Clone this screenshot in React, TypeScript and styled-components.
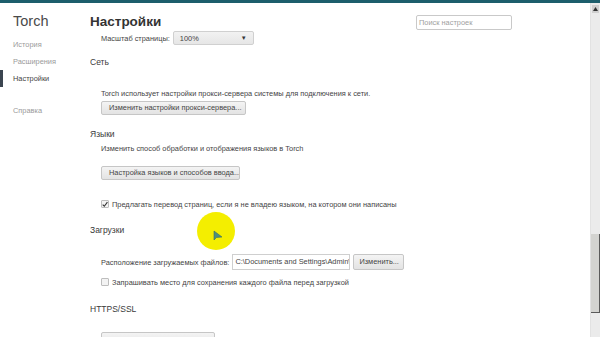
import React from "react";
import styled, { createGlobalStyle } from "styled-components";

const Global = createGlobalStyle`
  html, body { margin: 0; padding: 0; background: #fff; overflow: hidden; }
  body { font-family: "Liberation Sans", Arial, sans-serif; }
`;

const Page = styled.div`
  width: 600px;
  height: 337px;
  display: flex;
  flex-direction: column;
  overflow: hidden;
  position: relative;
  background: #fff;
`;

const TopBar = styled.div`
  height: 3px;
  background: #1d5e6c;
  flex: none;
`;

const Body = styled.div`
  flex: 1;
  display: flex;
  min-height: 0;
`;

const Sidebar = styled.div`
  width: 90px;
  flex: none;
  display: flex;
  flex-direction: column;
  padding-top: 8px;
`;

const Brand = styled.div`
  flex: none;
  height: 20px;
  line-height: 20px;
  padding-left: 13px;
  font-size: 14.5px;
  color: #4a4a4a;
`;

const NavItem = styled.div<{ $active?: boolean; $mt?: number }>`
  flex: none;
  height: 17px;
  line-height: 17px;
  margin-top: ${(p) => p.$mt ?? 0}px;
  padding-left: ${(p) => (p.$active ? 10 : 13)}px;
  border-left: ${(p) => (p.$active ? "3px solid #3b4550" : "none")};
  font-size: 7.4px;
  color: ${(p) => (p.$active ? "#444" : "#9a9a9a")};
`;

const Main = styled.div`
  flex: 1;
  display: flex;
  flex-direction: column;
  padding-top: 8px;
  min-width: 0;
  overflow: hidden;
`;

const HeaderRow = styled.div`
  flex: none;
  height: 20px;
  display: flex;
  align-items: center;
  justify-content: space-between;
  padding-right: 78px;
`;

const Title = styled.div`
  font-size: 13.5px;
  font-weight: bold;
  color: #333;
`;

const Search = styled.div`
  width: 92px;
  height: 13px;
  border: 1px solid #c9c9c9;
  border-radius: 2px;
  font-size: 7.4px;
  line-height: 13px;
  color: #a0a0a0;
  padding-left: 2px;
  margin-top: 2px;
`;

const Row = styled.div<{ $mt?: number; $h?: number }>`
  flex: none;
  margin-top: ${(p) => p.$mt ?? 0}px;
  height: ${(p) => p.$h ?? 12}px;
  padding-left: 11px;
  display: flex;
  align-items: center;
  gap: 3px;
  font-size: 7.4px;
  color: #444;
  white-space: nowrap;
`;

const SectionTitle = styled.div<{ $mt: number }>`
  flex: none;
  margin-top: ${(p) => p.$mt}px;
  height: 12px;
  line-height: 12px;
  font-size: 8.5px;
  color: #3a3a3a;
`;

const Button = styled.div<{ $w?: number }>`
  height: 14px;
  ${(p) => (p.$w ? `width: ${p.$w}px;` : "")}
  box-sizing: border-box;
  padding: 0 7px;
  border: 1px solid #c6c6c6;
  border-radius: 2px;
  background: linear-gradient(#f4f4f4, #e3e3e3);
  font-size: 7.4px;
  line-height: 12px;
  color: #444;
  white-space: nowrap;
  overflow: hidden;
`;

const Select = styled.div`
  width: 81px;
  height: 14px;
  box-sizing: border-box;
  padding: 0 6px;
  border: 1px solid #d0d0d0;
  border-radius: 2px;
  background: linear-gradient(#f2f2f2, #e6e6e6);
  display: flex;
  align-items: center;
  justify-content: space-between;
  font-size: 7.4px;
  color: #444;
`;

const Caret = styled.span`
  font-size: 6px;
  color: #333;
`;

const PathInput = styled.div`
  width: 118px;
  height: 16px;
  box-sizing: border-box;
  border: 1px solid #cfcfcf;
  padding-left: 2px;
  font-size: 7.4px;
  line-height: 14px;
  color: #444;
  overflow: hidden;
  white-space: nowrap;
`;

const SmallButton = styled(Button)`
  height: 16px;
  line-height: 14px;
  width: 51px;
  padding: 0 5px;
`;

const Check = styled.span`
  width: 6px;
  height: 6px;
  border: 1px solid #bdbdbd;
  border-radius: 1px;
  background: #f3f3f3;
  flex: none;
  display: inline-flex;
  align-items: center;
  justify-content: center;
  overflow: visible;
`;

const Scrollbar = styled.div`
  width: 9px;
  flex: none;
  background: #ebebeb;
  border-left: 1px solid #e2e2e2;
  display: flex;
  flex-direction: column;
`;

const ScrollUp = styled.div`
  flex: none;
  height: 8px;
  margin: 2px 1px 0;
  display: flex;
  align-items: center;
  justify-content: center;
  background: #cfcfcf;
`;

const Thumb = styled.div`
  flex: none;
  margin-top: 221px;
  height: 78px;
  background: #d3d3d0;
  border-right: 1px solid #5a5a5a;
  border-bottom: 1px solid #5a5a5a;
`;

const Highlight = styled.div`
  position: absolute;
  left: 197px;
  top: 212px;
  width: 38px;
  height: 38px;
  border-radius: 50%;
  background: #f4ee00;
`;

const Cursor = styled.svg`
  position: absolute;
  left: 213px;
  top: 230px;
`;

export default function App() {
  return (
    <Page>
      <Global />
      <TopBar />
      <Body>
        <Sidebar>
          <Brand>Torch</Brand>
          <NavItem $mt={5}>История</NavItem>
          <NavItem>Расширения</NavItem>
          <NavItem $active>Настройки</NavItem>
          <NavItem $mt={15}>Справка</NavItem>
        </Sidebar>
        <Main>
          <HeaderRow>
            <Title>Настройки</Title>
            <Search>Поиск настроек</Search>
          </HeaderRow>
          <Row $h={14}>
            Масштаб страницы:
            <Select>
              100%<Caret>▼</Caret>
            </Select>
          </Row>
          <SectionTitle $mt={11}>Сеть</SectionTitle>
          <Row $mt={19}>
            Torch использует настройки прокси-сервера системы для подключения к сети.
          </Row>
          <Row $mt={2} $h={14}>
            <Button $w={145}>Изменить настройки прокси-сервера...</Button>
          </Row>
          <SectionTitle $mt={13}>Языки</SectionTitle>
          <Row $mt={2}>Изменить способ обработки и отображения языков в Torch</Row>
          <Row $mt={12} $h={14}>
            <Button $w={139}>Настройка языков и способов ввода...</Button>
          </Row>
          <Row $mt={18}>
            <Check>
              <svg width="7" height="7" viewBox="0 0 7 7">
                <path d="M0.8 3.6 L2.7 5.5 L6.3 0.8" fill="none" stroke="#333" strokeWidth="1.3" />
              </svg>
            </Check>
            Предлагать перевод страниц, если я не владею языком, на котором они написаны
          </Row>
          <SectionTitle $mt={14}>Загрузки</SectionTitle>
          <Row $mt={18} $h={16}>
            Расположение загружаемых файлов:
            <PathInput>C:\Documents and Settings\Admin\</PathInput>
            <SmallButton>Изменить...</SmallButton>
          </Row>
          <Row $mt={6}>
            <Check />
            Запрашивать место для сохранения каждого файла перед загрузкой
          </Row>
          <SectionTitle $mt={15}>HTTPS/SSL</SectionTitle>
          <Row $mt={17} $h={14}>
            <Button $w={114} />
          </Row>
        </Main>
        <Scrollbar>
          <ScrollUp>
            <svg width="5" height="4" viewBox="0 0 5 4">
              <path d="M0 4 L2.5 0 L5 4 Z" fill="#333" />
            </svg>
          </ScrollUp>
          <Thumb />
        </Scrollbar>
      </Body>
      <Highlight />
      <Cursor width="10" height="12" viewBox="0 0 10 12">
        <path d="M1 1 L1 10 L3.5 7.5 L9 7 Z" fill="#4f8f7d" stroke="#3b6f60" strokeWidth="0.6" />
      </Cursor>
    </Page>
  );
}
